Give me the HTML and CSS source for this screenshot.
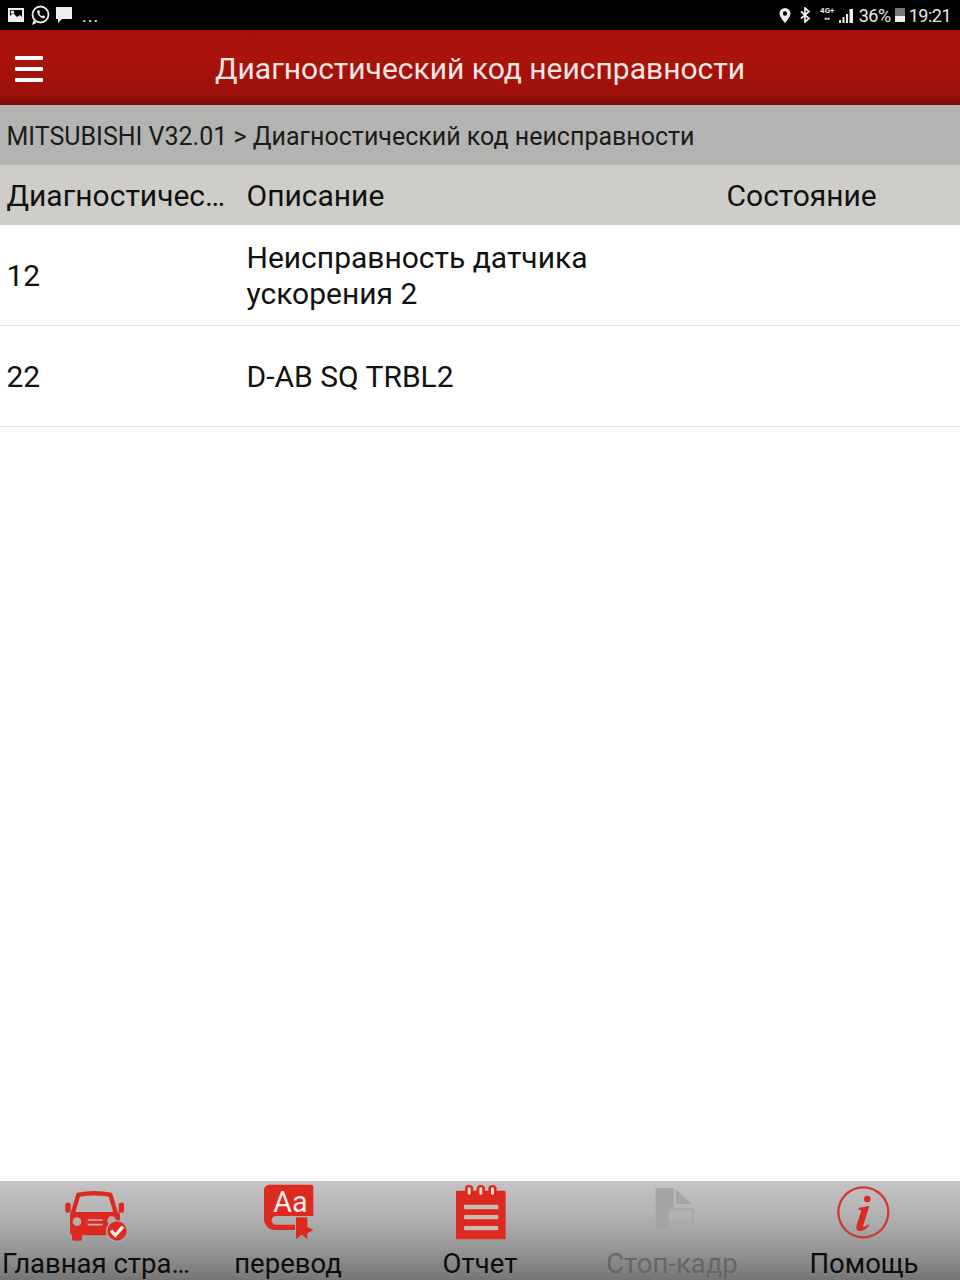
FILE: index.html
```html
<!DOCTYPE html>
<html lang="ru">
<head>
<meta charset="UTF-8" />
<title>Диагностический код неисправности</title>
<link rel="stylesheet" href="styles.css">
</head>
<body>
<div class="page">

  <!-- status bar -->
  <div class="status">
    <div class="status-left">
      <svg width="18" height="16" viewBox="0 0 18 16"><path fill="#eee" fill-rule="evenodd" d="M1 1h16v14H1zM3 3v6l3-3 4 4 3-2 2 2V3zM5.500 3.500a1.800 1.800 0 1 1 0 3.600 1.800 1.800 0 0 1 0-3.600z"/></svg>
      <svg width="20" height="21" viewBox="0 0 20 21"><circle cx="10.500" cy="9.500" r="8" fill="none" stroke="#eee" stroke-width="1.800"/><path fill="#eee" d="M2 20l1.500-5 3 3zM7.500 5.500l1.500-.5 1.200 2.500-1 1c.6 1.300 1.400 2 2.700 2.700l1-1 2.300 1.300-.5 1.500c-3.500 1.200-8.500-3.800-7.200-7.500z"/></svg>
      <svg width="18" height="18" viewBox="0 0 18 18"><path fill="#eee" d="M1 1h16v12H7l-4 4v-4H1z"/></svg>
      <span class="dots">...</span>
    </div>
    <div class="status-right">
      <svg width="12" height="15" viewBox="0 0 12 15"><path fill="#eee" fill-rule="evenodd" d="M6 0a5.500 5.500 0 0 1 5.500 5.500C11.500 9 6 15 6 15S.5 9 .5 5.500A5.500 5.500 0 0 1 6 0zm0 3.300a2.200 2.200 0 1 0 0 4.400 2.200 2.200 0 0 0 0-4.400z"/></svg>
      <svg class="ic-bt" width="11" height="16" viewBox="0 0 11 16"><path fill="none" stroke="#eee" stroke-width="1.700" d="M1 4.500l8 7-4 3.500V1l4 3.500-8 7"/></svg>
      <span class="net">4G+<i>▪▪</i></span>
      <svg class="ic-signal" width="15" height="15" viewBox="0 0 15 15"><path fill="#eee" d="M0 12h2v3H0zM3.500 9h2v6h-2zM7 6h2v9H7zM10.500 1H14v14h-3.500z"/></svg>
      <span class="pct">36%</span>
      <span class="battery"></span>
      <span class="clock">19:21</span>
    </div>
  </div>

  <!-- red title bar -->
  <div class="topbar">
    <div class="burger"><span></span><span></span><span></span></div>
    <div class="title">Диагностический код неисправности</div>
  </div>

  <div class="crumb">MITSUBISHI V32.01 &gt; Диагностический код неисправности</div>

  <div class="row head">
    <div class="cell code">Диагностичес…</div>
    <div class="cell desc">Описание</div>
    <div class="cell state">Состояние</div>
  </div>

  <div class="row item">
    <div class="cell code">12</div>
    <div class="cell desc">Неисправность датчика<br>ускорения 2</div>
    <div class="cell state"></div>
  </div>
  <div class="row item">
    <div class="cell code">22</div>
    <div class="cell desc">D-AB SQ TRBL2</div>
    <div class="cell state"></div>
  </div>

  <div class="spacer"></div>

  <!-- bottom tabs -->
  <div class="tabs">
    <div class="tab">
      <svg width="80" height="65" viewBox="0 3 240 195">
        <path fill="#dd2a20" fill-rule="evenodd" d="M62 38Q115 28 168 38L187 102H43zM72 50L58 97H172L158 50Q115 43 72 50z"/>
        <rect x="28" y="68" width="16" height="30" rx="5" fill="#dd2a20"/>
        <rect x="188" y="68" width="16" height="30" rx="5" fill="#dd2a20"/>
        <rect x="42" y="96" width="150" height="70" rx="10" fill="#dd2a20"/>
        <rect x="48" y="158" width="30" height="24" rx="6" fill="#dd2a20"/>
        <circle cx="63" cy="125" r="13" fill="#b8aaa6"/>
        <circle cx="167" cy="122" r="13" fill="#b8aaa6"/>
        <path stroke="#c4b4b0" stroke-width="5" d="M95 120H140M95 134H140"/>
        <circle cx="183" cy="153" r="31" fill="#dd2a20" stroke="#ababab" stroke-width="4"/>
        <path fill="none" stroke="#f6ecea" stroke-width="10" d="M165 152L178 166L201 140"/>
      </svg>
      <span class="tab-label">Главная стра…</span>
    </div>
    <div class="tab">
      <svg width="80" height="65" viewBox="-6 3 240 195">
        <path fill="#dd2a20" d="M58 14H182a8 8 0 0 1 8 8V108H78a13 13 0 0 0 0 26H135V150H75a33 33 0 0 1-33-33V30a16 16 0 0 1 16-16z"/>
        <text x="121" y="95" class="aa">Aa</text>
        <path fill="#dd2a20" d="M138 112H172V178L155 164L138 178zM172 140L190 150L172 160z"/>
      </svg>
      <span class="tab-label">перевод</span>
    </div>
    <div class="tab">
      <svg width="80" height="65" viewBox="0 3 240 195">
        <rect x="48" y="32" width="149" height="146" rx="4" fill="#dd2a20"/>
        <rect x="75" y="15" width="25" height="38" rx="12" fill="#dd2a20"/>
        <rect x="110" y="15" width="25" height="38" rx="12" fill="#dd2a20"/>
        <rect x="145" y="15" width="25" height="38" rx="12" fill="#dd2a20"/>
        <rect x="83" y="22" width="9" height="22" rx="4" fill="#e2d2cc"/>
        <rect x="118" y="22" width="9" height="22" rx="4" fill="#e2d2cc"/>
        <rect x="153" y="22" width="9" height="22" rx="4" fill="#e2d2cc"/>
        <rect x="72" y="74" width="103" height="14" rx="4" fill="#c9bcb5"/>
        <rect x="72" y="105" width="103" height="13" rx="4" fill="#c9bcb5"/>
        <rect x="72" y="138" width="103" height="13" rx="4" fill="#c9bcb5"/>
      </svg>
      <span class="tab-label">Отчет</span>
    </div>
    <div class="tab off">
      <svg width="80" height="65" viewBox="-9 3 240 195">
        <path fill="#a3a3a3" d="M62 25H116V84H98V145H62z"/>
        <path fill="#a5a5a5" d="M122 28L170 72H122z"/>
        <path fill="none" stroke="#a7a7a7" stroke-width="7" d="M100 88H173V132H100z"/>
      </svg>
      <span class="tab-label">Стоп-кадр</span>
    </div>
    <div class="tab">
      <svg width="80" height="65" viewBox="-3 3 240 195">
        <circle cx="115" cy="97" r="75" fill="none" stroke="#d03c33" stroke-width="7"/>
        <circle cx="127" cy="57" r="10" fill="#dd2a20"/>
        <path fill="#dd2a20" d="M100 84L133 78L115 135Q113 143 120 140L130 133L132 137Q115 155 103 153Q90 152 95 135L108 95Q110 87 100 90z"/>
      </svg>
      <span class="tab-label">Помощь</span>
    </div>
  </div>

</div>
</body>
</html>
```
FILE: styles.css
```css
/* base */
html, body {
  margin: 0;
  padding: 0;
}
body {
  background: #fff;
  color: #111;
  font-family: Roboto, "Liberation Sans", sans-serif;
}
.page {
  width: 960px;
  height: 1280px;
  display: flex;
  flex-direction: column;
  overflow: hidden;
}

/* status bar */
.status {
  height: 30px;
  background: #000;
  display: flex;
  justify-content: space-between;
  align-items: center;
  padding: 0 9px 0 7px;
  color: #e8e8e8;
}
.status-left, .status-right {
  display: flex;
  align-items: center;
}
.status-left {
  gap: 5px;
}
.dots {
  font-size: 18px;
  letter-spacing: 1px;
  margin-left: 4px;
}
.status-right {
  font-size: 18px;
  letter-spacing: -0.5px;
}
.ic-bt {
  margin-left: 9px;
}
.net {
  font-size: 8px;
  font-weight: 700;
  line-height: 8px;
  width: 17px;
  margin-left: 8px;
  text-align: center;
  letter-spacing: 0;
}
.net i {
  display: block;
  font-style: normal;
}
.ic-signal {
  margin-left: 3px;
}
.pct {
  margin-left: 5px;
}
.battery {
  width: 10px;
  height: 14px;
  margin-left: 4px;
  background: linear-gradient(#777 55%, #eee 55%);
}
.clock {
  margin-left: 4px;
}

/* title bar */
.topbar {
  height: 75px;
  box-sizing: border-box;
  background: linear-gradient(#a5120a 0%, #ab140c 30%, #9e100a 85%, #7c0a06 100%);
  position: relative;
  display: flex;
  align-items: center;
  justify-content: center;
}
.title {
  color: #f4e6e2;
  font-size: 30px;
  padding-top: 2px;
}
.burger {
  position: absolute;
  left: 15px;
  top: 26px;
  display: flex;
  flex-direction: column;
  gap: 7px;
}
.burger span {
  display: block;
  width: 28px;
  height: 4px;
  background: #fff;
  border-radius: 1px;
}

/* breadcrumb */
.crumb {
  height: 60px;
  box-sizing: border-box;
  line-height: 64px;
  padding-left: 6.5px;
  font-size: 25px;
  background: #b3b3b1;
  color: #1b1b1b;
  white-space: nowrap;
}

/* table */
.row {
  display: flex;
  align-items: center;
  font-size: 30px;
}
.cell {
  box-sizing: border-box;
  padding: 2px 0 0 6.5px;
  line-height: 36px;
}
.code {
  width: 240px;
  white-space: nowrap;
}
.desc {
  width: 480px;
}
.state {
  width: 240px;
}
.head {
  height: 60px;
  background: #cfcdc9;
}
.item {
  height: 101px;
  box-sizing: border-box;
  border-bottom: 1px solid #e2e2e2;
  background: #fff;
}
.spacer {
  flex: 1;
}

/* bottom tabs */
.tabs {
  height: 99px;
  display: flex;
  background: linear-gradient(#c4c4c4 0%, #b2b2b2 35%, #9a9a9a 65%, #767676 100%);
}
.tab {
  width: 192px;
  display: flex;
  flex-direction: column;
  align-items: center;
}
.tab svg {
  flex: none;
}
.tab-label {
  line-height: 36px;
  font-size: 27.5px;
  color: #0c0c0c;
  white-space: nowrap;
}
.off .tab-label {
  color: #666;
}
.aa {
  fill: #fbeeea;
  font-family: Roboto, sans-serif;
  font-size: 86px;
  text-anchor: middle;
}
```
